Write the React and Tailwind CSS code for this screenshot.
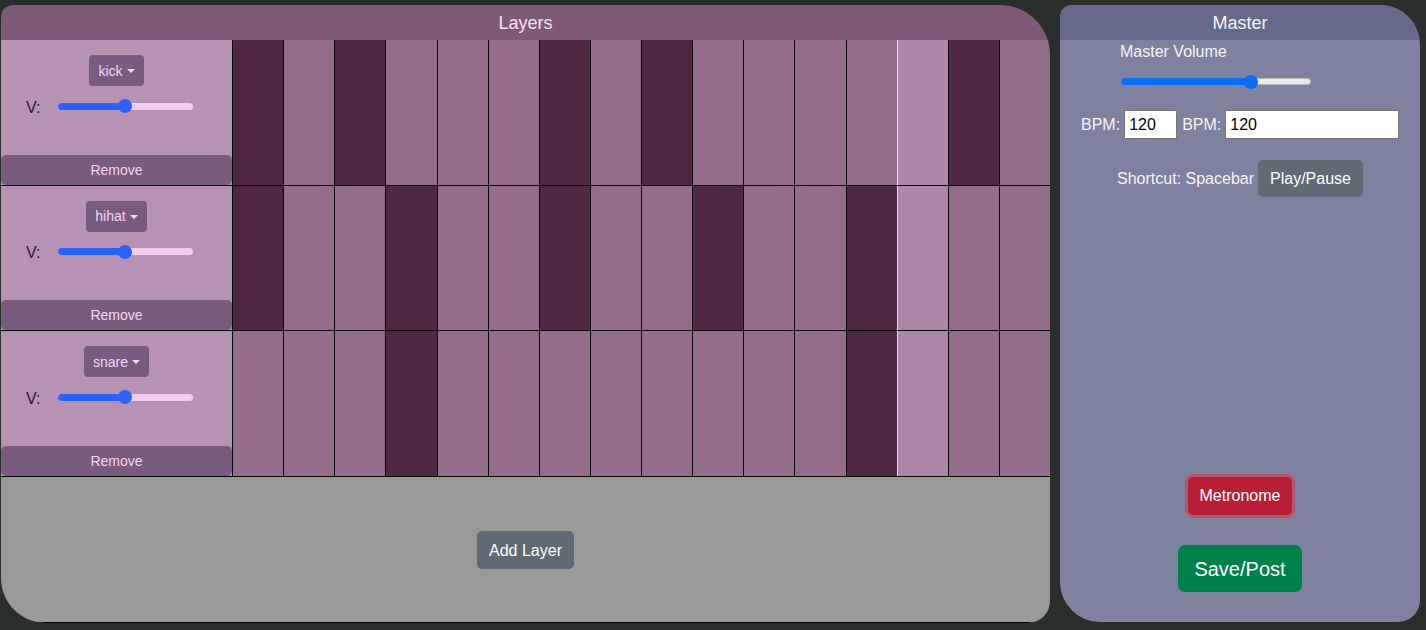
import React from 'react';

// step grid for each layer: indices of the active steps
const layers = [
  { name: 'kick', volume: 0.5, active: [0, 2, 6, 8, 14] },
  { name: 'hihat', volume: 0.5, active: [0, 3, 6, 9, 12] },
  { name: 'snare', volume: 0.5, active: [3, 12] },
];

const currentStep = 13;
const steps = Array.from({ length: 16 }, (_, i) => i);

const Slider = ({ value, width, fill, rest, restBorder }) => (
  <div className="relative h-[7px] rounded-full" style={{ width }}>
    <div className={`absolute inset-0 rounded-full ${rest} ${restBorder ? 'border border-[#b9b9b9]' : ''}`} />
    <div
      className={`absolute left-0 top-0 h-full rounded-full ${fill}`}
      style={{ width: `calc(${value * 100}% )` }}
    />
    <div
      className={`absolute top-1/2 h-[14px] w-[14px] -translate-y-1/2 rounded-full ${fill}`}
      style={{ left: `calc(${value} * (100% - 14px))` }}
    />
  </div>
);

const LayerRow = ({ layer }) => (
  <div className="flex h-[145.5px] border-b border-black">
    <div className="flex w-[231px] flex-col items-center bg-[#b692b3]">
      <button className="mt-[15px] flex h-[31px] items-center rounded-[4px] bg-[#785c80] px-[9px] pt-px text-[14px] text-[#f6d5f2]">
        {layer.name}
        <span className="ml-1 inline-block h-0 w-0 border-x-[4px] border-t-[4px] border-x-transparent border-t-[#f6d5f2]" />
      </button>
      <div className="mt-[10px] flex h-[20px] w-full items-center">
        <span className="ml-[25px] pt-[3px] text-[16px] text-[#2b1a2a]">V:</span>
        <div className="ml-[17px]">
          <Slider value={layer.volume} width={135} fill="bg-[#2962ff]" rest="bg-[#f0cdef]" />
        </div>
      </div>
      <button className="mt-auto h-[30px] w-full rounded-[5px] bg-[#785c80] pt-px text-[14px] text-[#f6d5f2]">
        Remove
      </button>
    </div>
    <div className="grid flex-1 grid-cols-16">
      {steps.map((i) => {
        const on = layer.active.includes(i);
        let bg = 'bg-[#936d8b]';
        if (on) bg = 'bg-[#4f2944]';
        else if (i === currentStep) bg = 'bg-[#ad87a8]';
        const edge = i === currentStep ? 'border-[#f5d0f0]' : 'border-black';
        return <div key={i} className={`border-l ${edge} ${bg}`} />;
      })}
    </div>
  </div>
);

export default function App() {
  return (
    <div className="h-[630px] w-full overflow-hidden bg-[#2a2f2e] font-['Liberation_Sans',Arial,sans-serif]">
      <div className="flex gap-[10px] pt-[5px]">
        {/* Layers */}
        <div className="ml-px flex h-[618px] w-[1049px] flex-col overflow-hidden rounded-tl-[12px] rounded-tr-[50px] rounded-br-[22px] rounded-bl-[45px]">
          <div className="flex h-[35px] items-center justify-center bg-[#7f5a78] pt-[2px] text-[18px] text-[#f5e2f1]">
            Layers
          </div>
          {layers.map((layer) => (
            <LayerRow key={layer.name} layer={layer} />
          ))}
          <div className="flex flex-1 items-center justify-center border-b border-black bg-[#999999] pt-[2px]">
            <button className="h-[38px] rounded-[5px] bg-[#5f6a74] px-3 pt-px text-[16px] text-white">
              Add Layer
            </button>
          </div>
        </div>

        {/* Master */}
        <div className="flex h-[617px] w-[360px] flex-col overflow-hidden rounded-tl-[12px] rounded-tr-[40px] rounded-br-[22px] rounded-bl-[40px] bg-[#7e829e]">
          <div className="flex h-[35px] shrink-0 items-center justify-center bg-[#666a8a] pt-[2px] text-[18px] text-[#f4f4f8]">
            Master
          </div>
          <div className="pl-[60px] pt-[3px] text-[16px] leading-[18px] text-[#f4f4f8]">Master Volume</div>
          <div className="ml-[61px] mt-[17px]">
            <Slider value={0.7} width={190} fill="bg-[#0b6cf5]" rest="bg-[#e9e9e9]" restBorder />
          </div>
          <div className="mt-[25px] flex items-center pl-[21px] text-[16px] text-[#f4f4f8]">
            <span className="pt-px">BPM:</span>
            <input
              readOnly
              value="120"
              className="ml-[4px] h-[29px] w-[53px] border border-[#767676] bg-white pl-[4px] pt-px text-[16px] text-black outline-none"
            />
            <span className="ml-[5px] pt-px">BPM:</span>
            <input
              readOnly
              value="120"
              className="ml-[4px] h-[29px] w-[174px] border border-[#767676] bg-white pl-[4px] pt-px text-[16px] text-black outline-none"
            />
          </div>
          <div className="mt-[21px] flex items-center justify-center gap-[4px] text-[16px] text-[#f4f4f8]">
            <span>Shortcut: Spacebar</span>
            <button className="h-[37px] rounded-[5px] bg-[#5f6a74] px-3 pt-px text-white">Play/Pause</button>
          </div>
          <div className="mt-auto flex flex-col items-center gap-[30px] pb-[30px]">
            <button className="h-[38px] rounded-[5px] bg-[#b81e35] px-3 text-[16px] text-white ring-[3px] ring-[#b3596f]">
              Metronome
            </button>
            <button className="h-[47px] rounded-[7px] bg-[#00804b] px-4 text-[20px] text-white">
              Save/Post
            </button>
          </div>
        </div>
      </div>
    </div>
  );
}
